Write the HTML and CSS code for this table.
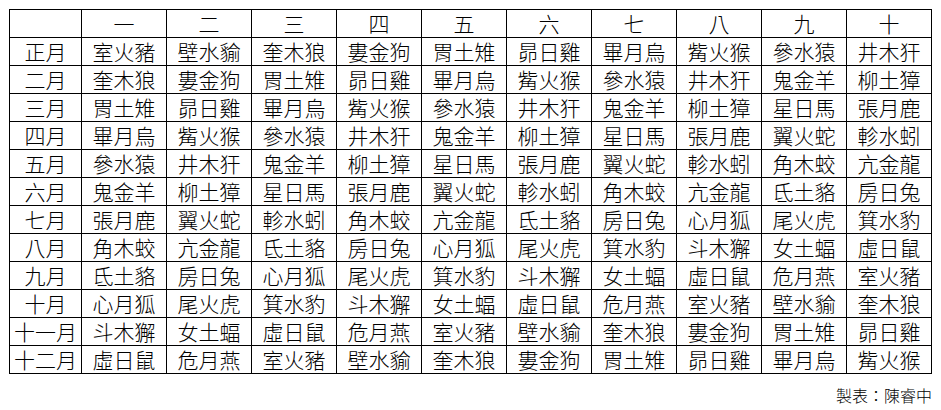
FILE: index.html
```html
<!DOCTYPE html>
<html lang="zh-Hant">
<head>
<meta charset="utf-8">
<link rel="stylesheet" href="styles.css">
</head>
<body>
<div class="page">
<table class="grid">
<colgroup><col class="c-month"><col class="c-day"><col class="c-day"><col class="c-day"><col class="c-day"><col class="c-day"><col class="c-day"><col class="c-day"><col class="c-day"><col class="c-day"><col class="c-day"></colgroup>
<tr><td></td><td>一</td><td>二</td><td>三</td><td>四</td><td>五</td><td>六</td><td>七</td><td>八</td><td>九</td><td>十</td></tr>
<tr><td>正月</td><td>室火豬</td><td>壁水貐</td><td>奎木狼</td><td>婁金狗</td><td>胃土雉</td><td>昴日雞</td><td>畢月烏</td><td>觜火猴</td><td>參水猿</td><td>井木犴</td></tr>
<tr><td>二月</td><td>奎木狼</td><td>婁金狗</td><td>胃土雉</td><td>昴日雞</td><td>畢月烏</td><td>觜火猴</td><td>參水猿</td><td>井木犴</td><td>鬼金羊</td><td>柳土獐</td></tr>
<tr><td>三月</td><td>胃土雉</td><td>昴日雞</td><td>畢月烏</td><td>觜火猴</td><td>參水猿</td><td>井木犴</td><td>鬼金羊</td><td>柳土獐</td><td>星日馬</td><td>張月鹿</td></tr>
<tr><td>四月</td><td>畢月烏</td><td>觜火猴</td><td>參水猿</td><td>井木犴</td><td>鬼金羊</td><td>柳土獐</td><td>星日馬</td><td>張月鹿</td><td>翼火蛇</td><td>軫水蚓</td></tr>
<tr><td>五月</td><td>參水猿</td><td>井木犴</td><td>鬼金羊</td><td>柳土獐</td><td>星日馬</td><td>張月鹿</td><td>翼火蛇</td><td>軫水蚓</td><td>角木蛟</td><td>亢金龍</td></tr>
<tr><td>六月</td><td>鬼金羊</td><td>柳土獐</td><td>星日馬</td><td>張月鹿</td><td>翼火蛇</td><td>軫水蚓</td><td>角木蛟</td><td>亢金龍</td><td>氐土貉</td><td>房日兔</td></tr>
<tr><td>七月</td><td>張月鹿</td><td>翼火蛇</td><td>軫水蚓</td><td>角木蛟</td><td>亢金龍</td><td>氐土貉</td><td>房日兔</td><td>心月狐</td><td>尾火虎</td><td>箕水豹</td></tr>
<tr><td>八月</td><td>角木蛟</td><td>亢金龍</td><td>氐土貉</td><td>房日兔</td><td>心月狐</td><td>尾火虎</td><td>箕水豹</td><td>斗木獬</td><td>女土蝠</td><td>虛日鼠</td></tr>
<tr><td>九月</td><td>氐土貉</td><td>房日兔</td><td>心月狐</td><td>尾火虎</td><td>箕水豹</td><td>斗木獬</td><td>女土蝠</td><td>虛日鼠</td><td>危月燕</td><td>室火豬</td></tr>
<tr><td>十月</td><td>心月狐</td><td>尾火虎</td><td>箕水豹</td><td>斗木獬</td><td>女土蝠</td><td>虛日鼠</td><td>危月燕</td><td>室火豬</td><td>壁水貐</td><td>奎木狼</td></tr>
<tr><td>十一月</td><td>斗木獬</td><td>女土蝠</td><td>虛日鼠</td><td>危月燕</td><td>室火豬</td><td>壁水貐</td><td>奎木狼</td><td>婁金狗</td><td>胃土雉</td><td>昴日雞</td></tr>
<tr><td>十二月</td><td>虛日鼠</td><td>危月燕</td><td>室火豬</td><td>壁水貐</td><td>奎木狼</td><td>婁金狗</td><td>胃土雉</td><td>昴日雞</td><td>畢月烏</td><td>觜火猴</td></tr>
</table>
<div class="credit">製表：陳睿中</div>
</div>
</body>
</html>
```
FILE: styles.css
```css
html, body {
  margin: 0;
  padding: 0;
  background: #ffffff;
}
.page {
  padding: 9px 0 0 9px;
  width: 923px;
  font-family: "Noto Sans CJK TC", "Noto Sans CJK SC", sans-serif;
  color: #000000;
}
.grid {
  border-collapse: collapse;
  table-layout: fixed;
  width: 923px;
}
.c-month { width: 72px; }
.c-day { width: 85px; }
.grid td {
  border: 1px solid #000000;
  height: 27px;
  padding: 0;
  text-align: center;
  vertical-align: middle;
  font-size: 21px;
  line-height: 27px;
  font-weight: 300;
  white-space: nowrap;
  overflow: hidden;
}
.credit {
  text-align: right;
  font-size: 16px;
  line-height: 20px;
  margin-top: 11px;
  font-weight: 300;
}
```
